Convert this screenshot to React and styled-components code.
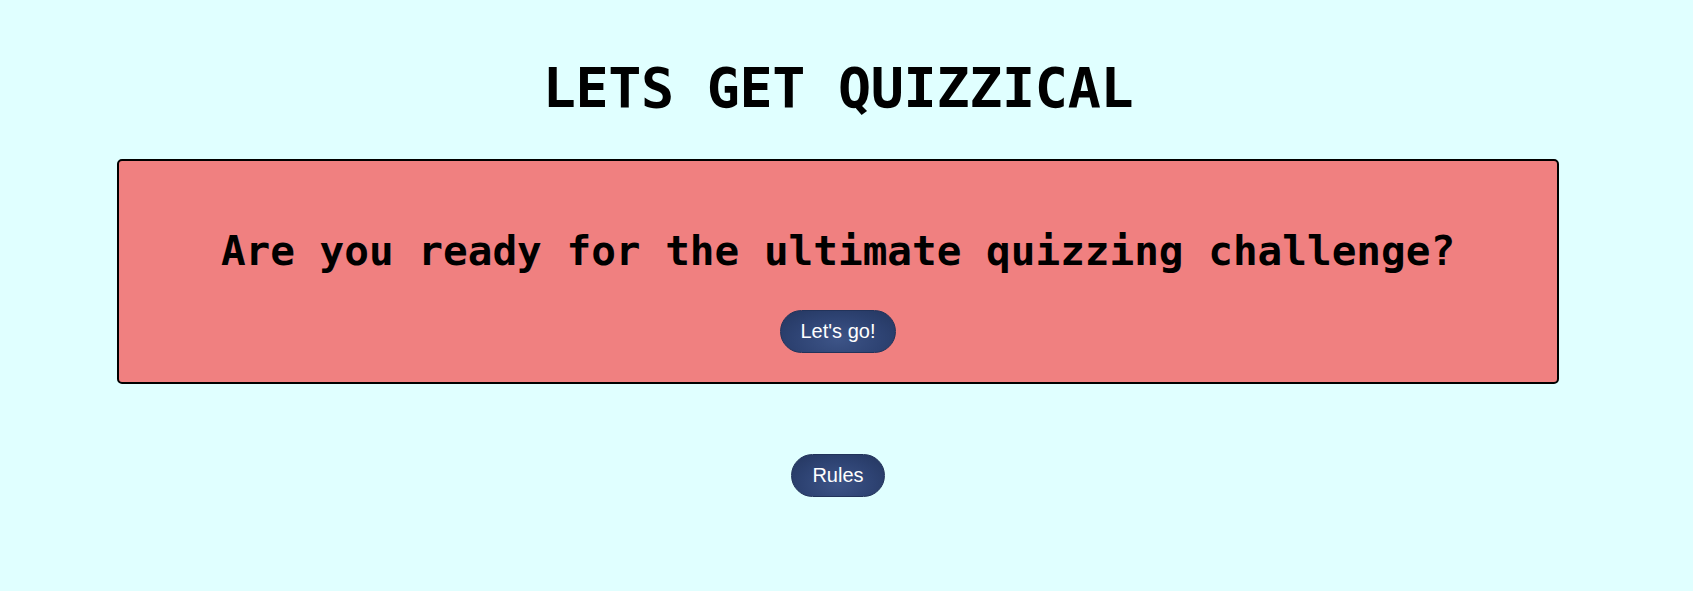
import React from "react";
import styled, { createGlobalStyle } from "styled-components";

const GlobalStyle = createGlobalStyle`
  html, body {
    margin: 0;
    padding: 0;
    background: #e0ffff;
  }
  body {
    font-family: "Liberation Sans", Arial, sans-serif;
  }
`;

const Page = styled.main`
  box-sizing: border-box;
  width: 100%;
  min-height: 591px;
  padding-right: 17px;
  display: flex;
  flex-direction: column;
  align-items: center;
`;

const Title = styled.h1`
  margin: 56px 0 0;
  font-family: "DejaVu Sans Mono", "Liberation Mono", monospace;
  font-weight: bold;
  font-size: 55px;
  line-height: 64px;
  color: #000;
  letter-spacing: -0.3px;
`;

const Card = styled.section`
  box-sizing: border-box;
  width: 86%;
  margin-top: 39px;
  padding: 66px 20px 29px;
  background: #f08080;
  border: 2px solid #000;
  border-radius: 5px;
  display: flex;
  flex-direction: column;
  align-items: center;
  gap: 35px;
`;

const Prompt = styled.h2`
  margin: 0;
  font-family: "DejaVu Sans Mono", "Liberation Mono", monospace;
  font-weight: bold;
  font-size: 41px;
  line-height: 48px;
  color: #000;
  text-align: center;
`;

const PillButton = styled.button`
  box-sizing: border-box;
  margin-top: ${(p) => p.$offset || 0}px;
  padding: 9px 20px;
  border: 1px solid #22335a;
  border-radius: 22px;
  background: radial-gradient(ellipse at 50% 70%, #3d5487 0%, #2e4373 55%, #24365f 100%);
  color: #fff;
  font-family: "Liberation Sans", Arial, sans-serif;
  font-size: 20px;
  line-height: 23px;
  cursor: pointer;
`;

export default function App() {
  return (
    <>
      <GlobalStyle />
      <Page>
        <Title>LETS GET QUIZZICAL</Title>
        <Card>
          <Prompt>Are you ready for the ultimate quizzing challenge?</Prompt>
          <PillButton>Let's go!</PillButton>
        </Card>
        <PillButton $offset={70}>Rules</PillButton>
      </Page>
    </>
  );
}
